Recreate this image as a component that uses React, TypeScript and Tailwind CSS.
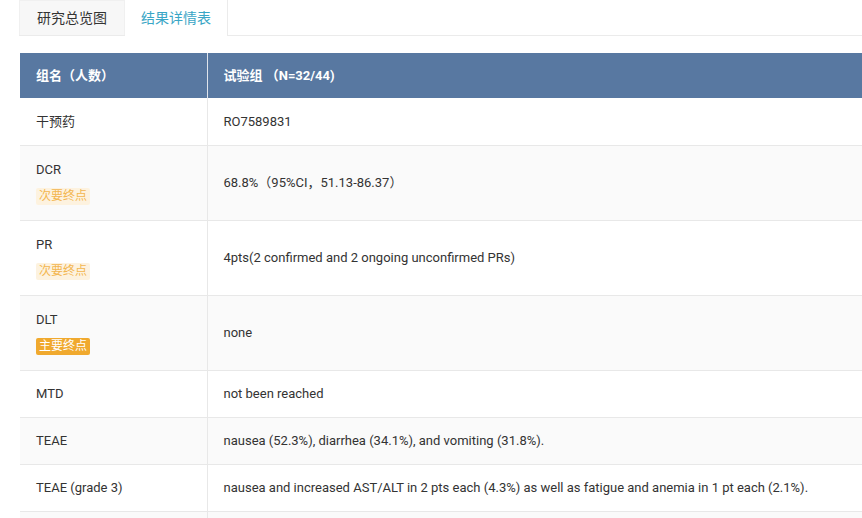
import React from 'react';

type Row = {
  name: string;
  value: string;
  badge?: 'main' | 'sub';
};

const rows: Row[] = [
  { name: '干预药', value: 'RO7589831' },
  { name: 'DCR', value: '68.8%（95%CI，51.13-86.37）', badge: 'sub' },
  { name: 'PR', value: '4pts(2 confirmed and 2 ongoing unconfirmed PRs)', badge: 'sub' },
  { name: 'DLT', value: 'none', badge: 'main' },
  { name: 'MTD', value: 'not been reached' },
  { name: 'TEAE', value: 'nausea (52.3%), diarrhea (34.1%), and vomiting (31.8%).' },
  {
    name: 'TEAE (grade 3)',
    value:
      'nausea and increased AST/ALT in 2 pts each (4.3%) as well as fatigue and anemia in 1 pt each (2.1%).',
  },
  { name: '', value: '' },
];

const Badge = ({ kind }: { kind: 'main' | 'sub' }) =>
  kind === 'main' ? (
    <span className="mt-[8px] inline-block rounded-[2px] bg-[#f0a92e] px-[3px] text-[12px] leading-[17px] text-white">
      主要终点
    </span>
  ) : (
    <span className="mt-[8px] inline-block rounded-[2px] bg-[#fdf2df] px-[3px] text-[12px] leading-[17px] text-[#f3b650]">
      次要终点
    </span>
  );

export default function App() {
  return (
    <div className="h-[518px] w-[862px] overflow-hidden bg-white font-['Roboto','Noto_Sans_CJK_SC',sans-serif] text-[13px] text-[#333]">
      <div className="ml-[19px] flex h-[36px] border-b border-[#ebebeb]">
        <div className="flex w-[106px] items-center justify-center border border-b-0 border-[#f0f0f0] bg-[#f7f7f7] text-[14px] text-[#333]">
          研究总览图
        </div>
        <div className="-mb-px flex w-[103px] items-center justify-center border-r border-[#ebebeb] bg-white text-[14px] text-[#3aa6c6]">
          结果详情表
        </div>
      </div>

      <table className="ml-[20px] mt-[17px] w-[860px] border-collapse">
        <thead>
          <tr className="h-[45px] bg-[#5878a1] text-left font-bold text-white">
            <th className="w-[187px] border-r border-[#dfe4ec] pl-[16px]">组名（人数）</th>
            <th className="pl-[16px]">试验组 （N=32/44)</th>
          </tr>
        </thead>
        <tbody>
          {rows.map((r, i) => (
            <tr
              key={i}
              className={`${r.badge ? 'h-[75px]' : 'h-[47px]'} ${i % 2 === 1 ? 'bg-[#fafafa]' : 'bg-white'} border-b border-[#e8e8e8]`}
            >
              <td className="border-r border-[#e8e8e8] pl-[16px] align-middle">
                <div>{r.name}</div>
                {r.badge && <Badge kind={r.badge} />}
              </td>
              <td className="pl-[16px] align-middle">{r.value}</td>
            </tr>
          ))}
        </tbody>
      </table>
    </div>
  );
}
